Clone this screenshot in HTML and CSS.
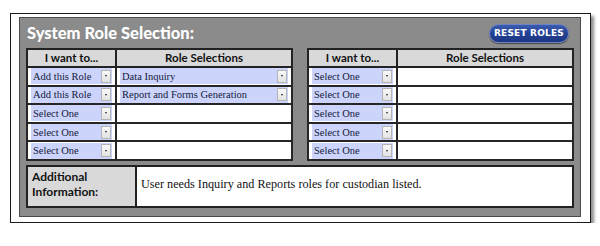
FILE: index.html
```html
<!DOCTYPE html>
<html lang="en">
<head>
<meta charset="utf-8">
<title>System Role Selection</title>
<link rel="stylesheet" href="styles.css">
</head>
<body>
<div class="frame">
  <div class="panel">
    <div class="topbar">
      <h1 class="title">System Role Selection:</h1>
      <button class="reset" type="button">RESET ROLES</button>
    </div>
    <div class="tables">
      <table class="roles">
        <colgroup><col class="c-want"><col></colgroup>
        <thead><tr><th>I want to...</th><th>Role Selections</th></tr></thead>
        <tbody>
          <tr><td><div class="sel"><span class="val">Add this Role</span><span class="btn"><i></i></span></div></td><td><div class="sel"><span class="val">Data Inquiry</span><span class="btn"><i></i></span></div></td></tr>
          <tr><td><div class="sel"><span class="val">Add this Role</span><span class="btn"><i></i></span></div></td><td><div class="sel"><span class="val">Report and Forms Generation</span><span class="btn"><i></i></span></div></td></tr>
          <tr><td><div class="sel"><span class="val">Select One</span><span class="btn"><i></i></span></div></td><td></td></tr>
          <tr><td><div class="sel"><span class="val">Select One</span><span class="btn"><i></i></span></div></td><td></td></tr>
          <tr><td><div class="sel"><span class="val">Select One</span><span class="btn"><i></i></span></div></td><td></td></tr>
        </tbody>
      </table>
      <table class="roles">
        <colgroup><col class="c-want"><col></colgroup>
        <thead><tr><th>I want to...</th><th>Role Selections</th></tr></thead>
        <tbody>
          <tr><td><div class="sel"><span class="val">Select One</span><span class="btn"><i></i></span></div></td><td></td></tr>
          <tr><td><div class="sel"><span class="val">Select One</span><span class="btn"><i></i></span></div></td><td></td></tr>
          <tr><td><div class="sel"><span class="val">Select One</span><span class="btn"><i></i></span></div></td><td></td></tr>
          <tr><td><div class="sel"><span class="val">Select One</span><span class="btn"><i></i></span></div></td><td></td></tr>
          <tr><td><div class="sel"><span class="val">Select One</span><span class="btn"><i></i></span></div></td><td></td></tr>
        </tbody>
      </table>
    </div>
    <div class="info">
      <div class="info-label">Additional<br>Information:</div>
      <div class="info-text">User needs Inquiry and Reports roles for custodian listed.</div>
    </div>
  </div>
</div>
</body>
</html>
```

FILE: styles.css
```css
html, body {
  margin: 0;
  padding: 0;
  background: #ffffff;
}

.frame {
  box-sizing: border-box;
  width: 581px;
  height: 210px;
  margin: 13px 0 0 10px;
  padding: 3px 9px 0 8px;
  background: #ffffff;
  border: 1px solid #1a1a1a;
  box-shadow: 3px 3px 3px rgba(0, 0, 0, 0.45);
}

.panel {
  box-sizing: border-box;
  width: 562px;
  height: 200px;
  padding: 0 6px;
  background: #8b8b8b;
  border: 1px solid #4b4b4b;
  display: flex;
  flex-direction: column;
}

.topbar {
  height: 30px;
  display: flex;
  align-items: center;
  justify-content: space-between;
}

.title {
  margin: 0 0 0 1px;
  font-family: "Lato", "Open Sans", sans-serif;
  font-weight: 900;
  font-size: 16.5px;
  line-height: 20px;
  color: #ffffff;
  padding-bottom: 1px;
}

.reset {
  box-sizing: border-box;
  width: 80px;
  height: 19px;
  margin: 0 5px 0 0;
  padding: 0;
  border: 1px solid #6d84c4;
  border-radius: 10px;
  background: linear-gradient(#3b5cb0, #233f92 55%, #1c3683);
  box-shadow: 0 1px 1px rgba(0, 0, 0, 0.5);
  color: #ffffff;
  font-family: "DejaVu Sans", sans-serif;
  font-weight: 700;
  font-size: 9px;
  letter-spacing: 0.2px;
  line-height: 17px;
  text-align: center;
}

.tables {
  display: flex;
  gap: 14px;
}

.roles {
  width: 267px;
  border-collapse: collapse;
  border: 2px solid #222222;
  table-layout: fixed;
  background: #ffffff;
}

.c-want {
  width: 89px;
}

.roles th {
  height: 16px;
  padding: 0;
  background: #d9d9d9;
  border: 2px solid #222222;
  font-family: "Lato", "Open Sans", sans-serif;
  font-weight: 700;
  font-size: 11.5px;
  line-height: 14px;
  color: #111111;
  text-align: center;
}

.roles td {
  height: 16.6px;
  padding: 0 3px 0 3px;
  border: 2px solid #262626;
  vertical-align: middle;
}

.sel {
  height: 16px;
  display: flex;
  align-items: center;
  justify-content: space-between;
  background: #cdd4fc;
  padding: 0 1px 0 2px;
}

.val {
  font-family: "Liberation Serif", "Times New Roman", serif;
  font-size: 10.5px;
  color: #121a3a;
  white-space: nowrap;
}

.btn {
  box-sizing: border-box;
  width: 10px;
  height: 13px;
  background: linear-gradient(#fafafa, #e2e2e2);
  border: 1px solid #b4b4b4;
  display: flex;
  align-items: center;
  justify-content: center;
}

.btn i {
  display: block;
  width: 0;
  height: 0;
  border-left: 1.5px solid transparent;
  border-right: 1.5px solid transparent;
  border-top: 2px solid #222222;
}

.info {
  margin-top: 4px;
  height: 43px;
  box-sizing: border-box;
  display: grid;
  grid-template-columns: 109px 1fr;
  border: 2px solid #222222;
  background: #ffffff;
}

.info-label {
  background: #d9d9d9;
  border-right: 2px solid #222222;
  padding: 2px 0 0 4px;
  font-family: "Lato", "Open Sans", sans-serif;
  font-weight: 700;
  font-size: 12px;
  line-height: 15px;
  color: #111111;
}

.info-text {
  padding: 10px 0 0 4px;
  font-family: "Liberation Serif", "Times New Roman", serif;
  font-size: 12.2px;
  color: #111111;
}
```
